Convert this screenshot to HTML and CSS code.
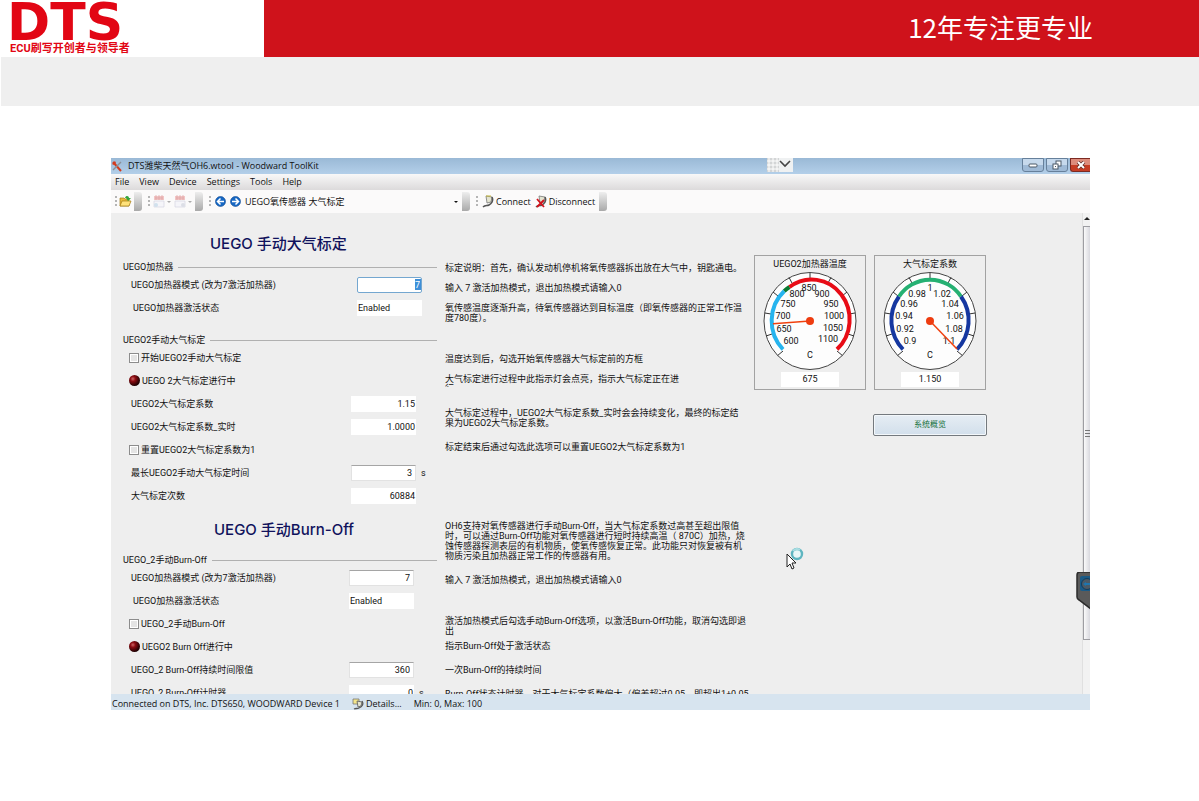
FILE: index.html
```html
<!doctype html>
<html lang="zh-CN">
<head>
	<meta charset="UTF-8">
	<title>DTS</title>
	<link rel="stylesheet" href="styles.css">
</head>
<body>
	<header class="banner">
		<div class="logo">
			<strong class="logo-name">DTS</strong>
			<span class="logo-sub">ECU刷写开创者与领导者</span>
		</div>
		<div class="slogan">12年专注更专业</div>
	</header>
	<div class="band"></div>

	<main class="window">
		<div class="titlebar">
			<svg class="app-icon" width="12" height="12" viewBox="0 0 12 12"><path d="M2 2l8 9" stroke="#d33a1c" stroke-width="2"/><path d="M10 2L2 10" stroke="#8a8f98" stroke-width="1.5"/><path d="M1 4l3-3 1 2-2 2z" fill="#d33a1c"/></svg>
			<span>DTS潍柴天然气OH6.wtool - Woodward ToolKit</span>
			<div class="win-buttons">
				<button class="win-btn" aria-label="Minimize"><svg width="10" height="8" viewBox="0 0 10 8"><rect x="1" y="3" width="8" height="3" rx="1" fill="#fff" stroke="#4b5866"/></svg></button>
				<button class="win-btn" aria-label="Restore"><svg width="10" height="10" viewBox="0 0 10 10"><g fill="#fff" stroke="#4b5866"><rect x="4" y="1" width="5" height="5"/><rect x="1" y="4" width="5" height="5"/></g><rect x="3" y="6" width="1" height="1" fill="#4b5866"/></svg></button>
				<button class="win-btn close" aria-label="Close"><svg width="10" height="8" viewBox="0 0 10 8"><path d="M2 1l6 6M8 1L2 7" stroke="#5b2a26" stroke-width="3.4"/><path d="M2 1l6 6M8 1L2 7" stroke="#fff" stroke-width="2"/></svg></button>
			</div>
			<div class="pull-tab">
				<svg width="26" height="14" viewBox="0 0 26 14"><rect width="12" height="14" fill="#d3d5d6"/><rect x="12" width="14" height="14" fill="#eff1f2"/><path d="M2 0v14M6 0v14M10 0v14M0 3h12M0 7h12M0 11h12" stroke="#fff"/><path d="M13 3l5 5 5-5" fill="none" stroke="#444" stroke-width="1.6"/></svg>
			</div>
		</div>

		<nav class="menubar">
			<a href="#file">File</a>
			<a href="#view">View</a>
			<a href="#device">Device</a>
			<a href="#settings">Settings</a>
			<a href="#tools">Tools</a>
			<a href="#help">Help</a>
		</nav>

		<div class="toolbar">
			<div class="tool-group g-open">
				<i class="grip"></i>
				<button class="tool" aria-label="Open"><svg width="13" height="13" viewBox="0 0 13 13"><path d="M1 11V3h4l1 1h4v7z" fill="#e9b93a" stroke="#a57b14" stroke-width=".7"/><path d="M1 11l2-5h9l-2 5z" fill="#ffe27a" stroke="#a57b14" stroke-width=".7"/><path d="M6 3c1-3 4-2 4 0h2L9 6 7 3z" fill="#35a53a"/></svg></button>
				<i class="tail"></i>
			</div>
			<div class="tool-group g-pages">
				<i class="grip"></i>
				<button class="tool faded" aria-label="Read"><svg width="12" height="13" viewBox="0 0 12 13"><path d="M1 1h10v4H1z" fill="#f0b9b9"/><path d="M2 3h8M3 0v5M6 0v5M9 0v5" stroke="#d98d8d" stroke-width=".7"/><path d="M1 6h10v6H1z" fill="#f4f5f9" stroke="#ccd" stroke-width=".7"/><circle cx="3" cy="10" r="2" fill="#c7dbea"/></svg><b class="caret"></b></button>
				<button class="tool faded" aria-label="Write"><svg width="12" height="13" viewBox="0 0 12 13"><path d="M1 1h10v4H1z" fill="#f0b9b9"/><path d="M2 3h8M3 0v5M6 0v5M9 0v5" stroke="#d98d8d" stroke-width=".7"/><path d="M1 6h10v6H1z" fill="#f4f5f9" stroke="#ccd" stroke-width=".7"/><circle cx="9" cy="10" r="2" fill="#d5d8e2"/></svg><b class="caret"></b></button>
				<i class="tail"></i>
			</div>
			<div class="tool-group">
				<i class="grip"></i>
				<button class="tool" aria-label="Back"><svg width="11" height="11" viewBox="0 0 11 11"><circle cx="5.5" cy="5.5" r="5" fill="#1768c4" stroke="#0e4891" stroke-width=".6"/><path d="M9 5.500H3M5.500 2.500l-3 3 3 3" fill="none" stroke="#fff" stroke-width="1.500"/></svg></button>
				<button class="tool" aria-label="Forward"><svg width="11" height="11" viewBox="0 0 11 11"><circle cx="5.5" cy="5.5" r="5" fill="#1768c4" stroke="#0e4891" stroke-width=".6"/><path d="M2 5.500h6M5.500 2.500l3 3-3 3" fill="none" stroke="#fff" stroke-width="1.500"/></svg></button>
				<select class="page-select" aria-label="Page"><option>UEGO氧传感器 大气标定</option></select>
				<b class="caret dark"></b>
				<i class="tail"></i>
			</div>
			<div class="tool-group">
				<i class="grip"></i>
				<button class="tool"><svg width="12" height="13" viewBox="0 0 12 13"><path d="M4 1l6 1-1 5-4 1z" fill="#e4e4d0" stroke="#777" stroke-width=".8"/><path d="M10 2c2 4-1 7-3 8-2 1-4 0-6 2" fill="none" stroke="#555" stroke-width="1.500"/><path d="M4 1h5" stroke="#c9bb3a"/></svg>Connect</button>
				<button class="tool"><svg width="12" height="13" viewBox="0 0 12 13"><path d="M4 1l6 1-1 5-4 1z" fill="#e4e4d0" stroke="#777" stroke-width=".8"/><path d="M10 2c2 4-1 7-3 8-2 1-4 0-6 2" fill="none" stroke="#555" stroke-width="1.500"/><path d="M2 4l7 8M9 5l-7 7" stroke="#d3121c" stroke-width="1.800"/></svg>Disconnect</button>
				<i class="tail"></i>
			</div>
		</div>

		<div class="workspace">
			<section class="forms">
				<h2 class="title">UEGO 手动大气标定</h2>
				<div class="group heater">
					<h3 class="legend">UEGO加热器</h3>
					<div class="row"><label for="mode1">UEGO加热器模式 (改为7激活加热器)</label><input class="field edit focus" id="mode1" value="7"></div>
					<div class="row status"><label for="state1">UEGO加热器激活状态</label><output class="field left" id="state1">Enabled</output></div>
				</div>
				<div class="group calib">
					<h3 class="legend">UEGO2手动大气标定</h3>
					<div class="row check"><input type="checkbox" id="start"><label for="start">开始UEGO2手动大气标定</label></div>
					<div class="row check"><i class="led"></i><span>UEGO 2大气标定进行中</span></div>
					<div class="row"><label for="factor">UEGO2大气标定系数</label><output class="field" id="factor">1.15</output></div>
					<div class="row"><label for="live">UEGO2大气标定系数_实时</label><output class="field" id="live">1.0000</output></div>
					<div class="row check"><input type="checkbox" id="reset"><label for="reset">重置UEGO2大气标定系数为1</label></div>
					<div class="row"><label for="longest">最长UEGO2手动大气标定时间</label><input class="field edit" id="longest" value="3"><span class="unit">s</span></div>
					<div class="row"><label for="times">大气标定次数</label><output class="field" id="times">60884</output></div>
				</div>
				<h2 class="title second">UEGO 手动Burn-Off</h2>
				<div class="group burn">
					<h3 class="legend">UEGO_2手动Burn-Off</h3>
					<div class="row"><label for="mode2">UEGO加热器模式 (改为7激活加热器)</label><input class="field edit" id="mode2" value="7"></div>
					<div class="row status"><label for="state2">UEGO加热器激活状态</label><output class="field left" id="state2">Enabled</output></div>
					<div class="row check"><input type="checkbox" id="burn"><label for="burn">UEGO_2手动Burn-Off</label></div>
					<div class="row check"><i class="led"></i><span>UEGO2 Burn Off进行中</span></div>
					<div class="row"><label for="limit">UEGO_2 Burn-Off持续时间限值</label><input class="field edit" id="limit" value="360"></div>
					<div class="row"><label for="timer">UEGO_2 Burn-Off计时器</label><output class="field" id="timer">0</output><span class="unit">s</span></div>
				</div>
			</section>

			<section class="notes">
				<p>标定说明：首先，确认发动机停机将氧传感器拆出放在大气中，钥匙通电。</p>
				<p>输入 7 激活加热模式，退出加热模式请输入0</p>
				<p>氧传感温度逐渐升高，待氧传感器达到目标温度（即氧传感器的正常工作温<br>度780度）。</p>
				<p class="gap-lg">温度达到后，勾选开始氧传感器大气标定前的方框</p>
				<p class="clipped">大气标定进行过程中此指示灯会点亮，指示大气标定正在进<br>行</p>
				<p class="gap-md">大气标定过程中，UEGO2大气标定系数_实时会会持续变化，最终的标定结<br>果为UEGO2大气标定系数。</p>
				<p class="gap-sm">标定结束后通过勾选此选项可以重置UEGO2大气标定系数为1</p>
				<p class="gap-xl">OH6支持对氧传感器进行手动Burn-Off，当大气标定系数过高甚至超出限值<br>时，可以通过Burn-Off功能对氧传感器进行短时持续高温（ 870C）加热，烧<br>蚀传感器探测表层的有机物质，使氧传感恢复正常。此功能只对恢复被有机<br>物质污染且加热器正常工作的传感器有用。</p>
				<p class="gap-sm">输入 7 激活加热模式，退出加热模式请输入0</p>
				<p class="gap-lg">激活加热模式后勾选手动Burn-Off选项，以激活Burn-Off功能，取消勾选即退<br>出</p>
				<p class="gap-xs">指示Burn-Off处于激活状态</p>
				<p class="gap-sm">一次Burn-Off的持续时间</p>
				<p class="gap-sm">Burn-Off状态计时器，对于大气标定系数偏大（偏差超过0.05，即超出1±0.05</p>
			</section>

			<section class="meters">
				<div class="gauges">
					<div class="gauge">
						<h4>UEGO2加热器温度</h4>
						<svg width="110" height="100" viewBox="1 0 110 100">
							<g transform="translate(56 49)">
								<ellipse class="dial" rx="46" ry="48.500"/>
								<path class="ticks" d="M0-48v6M21-43.700l-3 5.800M37-29l-5 4M45-8l-6 1M44 15l-6-2M32.500 34.600L27 30M-21-43.700l3 5.800M-37-29l5 4M-45-8l6 1M-44 15l6-2M-32.500 34.600L-27 30"/>
								<path class="arc" stroke="#26b4ee" d="M-27 28.300A38 40 0 0 1-25.700-30"/>
								<path class="arc" stroke="#0a7a30" d="M-25.700-30A38 40 0 0 1-20.500-34"/>
								<path class="arc" stroke="#e80c16" d="M-20.500-34A38 40 0 0 1 27 28.300"/>
								<path class="needle" d="M0 0L-37 2.700"/>
								<circle r="4" fill="#ee3c10"/>
							</g>
							<g class="scale">
								<text x="37" y="72">600</text><text x="30" y="60">650</text><text x="29" y="47">700</text><text x="34" y="35">750</text><text x="43" y="25">800</text><text x="55" y="19">850</text><text x="68" y="25">900</text><text x="77" y="35">950</text><text x="80" y="47">1000</text><text x="79" y="59">1050</text><text x="74" y="70">1100</text><text x="56" y="86">C</text>
							</g>
						</svg>
						<output>675</output>
					</div>
					<div class="gauge">
						<h4>大气标定系数</h4>
						<svg width="110" height="100" viewBox="1 0 110 100">
							<g transform="translate(56 49)">
								<ellipse class="dial" rx="46" ry="48.500"/>
								<path class="ticks" d="M0-48v6M21-43.700l-3 5.800M37-29l-5 4M45-8l-6 1M44 15l-6-2M32.500 34.600L27 30M-21-43.700l3 5.800M-37-29l5 4M-45-8l6 1M-44 15l6-2M-32.500 34.600L-27 30"/>
								<path class="arc" stroke="#1537a0" d="M-27 28.300A38 40 0 0 1-31-24.500"/>
								<path class="arc" stroke="#25b072" d="M-31-24.500A38 40 0 0 1 31-24.500"/>
								<path class="arc" stroke="#1537a0" d="M31-24.500A38 40 0 0 1 27 28.300"/>
							</g>
							<g class="scale">
								<text x="36" y="72">0.9</text><text x="31" y="60">0.92</text><text x="30" y="47">0.94</text><text x="35" y="35">0.96</text><text x="43" y="25">0.98</text><text x="56" y="19">1</text><text x="68" y="25">1.02</text><text x="76" y="35">1.04</text><text x="81" y="47">1.06</text><text x="80" y="60">1.08</text><text x="75" y="72">1.1</text><text x="56" y="86">C</text>
							</g>
							<g transform="translate(56 49)">
								<path class="needle" d="M0 0L27 28"/>
								<circle r="4" fill="#ee3c10"/>
							</g>
						</svg>
						<output>1.150</output>
					</div>
				</div>
				<button class="overview">系统概览</button>
			</section>

			<div class="scrollbar">
				<i class="arrow up"></i>
				<div class="thumb"><i></i></div>
				<i class="arrow down"></i>
			</div>

			<svg class="cursor" width="20" height="24" viewBox="0 0 20 24"><circle cx="12" cy="7" r="5" fill="#e8f6f7" stroke="#5fb5c0" stroke-width="2.400"/><path d="M8 4a5 5 0 0 1 7-1" fill="none" stroke="#a9dde2" stroke-width="2"/><path d="M2 7v13l3-3 2 5 2-1-2-5h4z" fill="#fff" stroke="#222" stroke-width="1"/></svg>
			<svg class="side-tab" width="14" height="38" viewBox="0 0 14 38"><path d="M15 0H4Q1 0 1 3v22q0 2 2 3l12 9z" fill="#5a5a5a" stroke="#2b2b2b" stroke-width="1.500"/><rect x="4" y="4" width="12" height="15" rx="2" fill="#1a5a86"/><circle cx="11" cy="12" r="5.500" fill="#4b5a66" stroke="#123c5c"/><path d="M7 12l3-2v1h5v2h-5v1z" fill="#1e75ae"/></svg>
		</div>

		<footer class="statusbar">
			<span>Connected on DTS, Inc. DTS650, WOODWARD Device 1</span>
			<a class="details" href="#details"><svg width="12" height="12" viewBox="0 0 12 12"><path d="M1 1h6v5H1z" fill="#f3e58a" stroke="#777" stroke-width=".8"/><path d="M5 3l5 1-1 4-3 1z" fill="#e4e4d0" stroke="#555" stroke-width=".8"/><path d="M10 3c2 3 0 6-3 7-2 1-3 0-5 1" fill="none" stroke="#555" stroke-width="1.300"/></svg>Details...</a>
			<span>Min: 0, Max: 100</span>
		</footer>
	</main>
</body>
</html>
```
FILE: styles.css
```css
*{margin:0;padding:0;box-sizing:border-box;}
body{
	background:#fff;
	color:#111;
	font-family:Roboto,"Noto Sans CJK SC",sans-serif;
	font-size:9px;
	line-height:10px;
}
button,input,select{font:inherit;color:inherit;}
a{color:inherit;text-decoration:none;}
h2,h3,h4{font-weight:normal;}
svg{display:block;flex:none;}

/* banner */
.banner{
	display:flex;
	height:57px;
}
.logo{
	width:264px;
	padding:2px 0 0 7px;
	color:#e20614;
}
.logo-name{
	display:block;
	font:bold 52px/40px "DejaVu Sans",sans-serif;
}
.logo-sub{
	display:block;
	padding-left:3px;
	font-size:11px;
	font-weight:bold;
	line-height:14px;
}
.slogan{
	flex:1;
	padding-right:106px;
	background:#cf121b;
	color:#fff;
	font:26px/54px "Noto Sans CJK SC",sans-serif;
	text-align:right;
}
.band{
	height:49px;
	margin-left:1px;
	background:#efefef;
}

/* window */
.window{
	margin:52px 109px 0 111px;
	background:#eee;
	white-space:nowrap;
}
.titlebar,.menubar,.toolbar,.statusbar{
	display:flex;
	align-items:center;
	font-family:"Open Sans","Noto Sans CJK SC",sans-serif;
}
.titlebar{
	position:relative;
	height:16px;
	gap:5px;
	background:linear-gradient(#9ab9d6,#b3cfe9);
}
.win-buttons{
	display:flex;
	gap:2px;
	align-self:flex-start;
	margin-left:auto;
}
.win-btn{
	display:flex;
	align-items:center;
	justify-content:center;
	width:22px;
	height:14px;
	border:1px solid #66809b;
	border-radius:0 0 3px 3px;
	background:linear-gradient(#c6d9ec 50%,#9fbad6 50%);
}
.win-btn.close{
	width:20px;
	border-color:#7c2a22;
	border-right:0;
	border-radius:0 0 0 3px;
	background:linear-gradient(#dd8c7c 50%,#c53d25 50%);
}
.pull-tab{
	position:absolute;
	left:67%;
	top:0;
}
.menubar{
	height:16px;
	padding-left:4px;
	gap:10px;
	background:linear-gradient(#f8f8f8,#dcdadb);
}
.toolbar{
	height:23px;
	padding-left:4px;
	background:#fbfafa;
}
.tool-group{
	display:flex;
	align-items:center;
	gap:4px;
	height:21px;
	margin-right:6px;
}
.g-open{gap:2px;}
.g-pages{gap:3px;}
.grip{
	width:2px;
	height:12px;
	background:repeating-linear-gradient(#b5b5b5 0 2px,transparent 2px 4px);
}
.tail{
	width:8px;
	height:19px;
	border-radius:0 3px 3px 0;
	background:linear-gradient(#eee,#a9a9a9);
}
.tool{
	display:flex;
	align-items:center;
	gap:2px;
	border:0;
	background:none;
}
.faded{opacity:.8;}
.caret{
	border:2px solid transparent;
	border-top:2px solid #999;
	border-bottom:0;
}
.caret.dark{border-top-color:#111;}
.page-select{
	width:205px;
	border:0;
	appearance:none;
	background:none;
}

/* workspace */
.workspace{
	position:relative;
	display:grid;
	grid-template-columns:326px 309px 1fr 8px;
	height:481px;
	overflow:hidden;
}
.forms{padding:19px 0 0 12px;}
.title{
	margin-bottom:5px;
	padding-left:87px;
	color:#10125c;
	font:500 15px/24px Inter,"Noto Sans CJK SC",sans-serif;
}
.title.second{
	margin:11px 0 12px;
	padding-left:91px;
}
.legend{
	display:flex;
	align-items:center;
	gap:5px;
	height:12px;
	font-size:9px;
}
.legend::after{
	content:"";
	flex:1;
	height:1px;
	background:#b0b0b0;
}
.group.calib{margin-top:15px;}
.row{
	display:grid;
	grid-template-columns:1fr 65px 15px;
	align-items:center;
	height:23px;
	padding-left:8px;
}
.calib .row{grid-template-columns:1fr 65px 21px;}
.burn .row{grid-template-columns:1fr 65px 23px;}
.row.status{padding-left:10px;}
.group .row.check{
	grid-template-columns:10px 1fr;
	gap:2px;
	padding-left:6px;
}
.row input[type=checkbox]{
	appearance:none;
	width:10px;
	height:10px;
	border:1px solid #8c8c8c;
	background:#e4e4e4;
	box-shadow:inset 0 0 0 1px #fff;
}
.led{
	width:11px;
	height:11px;
	border-radius:50%;
	background:radial-gradient(circle at 35% 35%,#c66 0,#8c0c12 25%,#2a0204 65%,#000);
}
.led + span{padding-left:1px;}
.field{
	display:block;
	width:65px;
	height:16px;
	padding:0 1px;
	border:0;
	background:#fff;
	line-height:16px;
	text-align:right;
}
.field.left{text-align:left;}
.field.edit{
	padding-right:3px;
	border:1px solid #e2e2e2;
	border-top-color:#a5a5a5;
	line-height:14px;
}
.field.edit.focus{
	padding-right:1px;
	border-color:#74a7d0;
	border-radius:2px;
	background:linear-gradient(#3e8fd8,#3e8fd8) no-repeat right 0 center/6px 11px #fff;
	color:#fff;
}
.unit{padding-left:5px;}

/* explanations */
.notes{
	padding:50px 0 0 8px;
}
.notes p + p{margin-top:10px;}
.notes p.gap-xs{margin-top:5px;}
.notes p.gap-sm{margin-top:14px;}
.notes p.gap-md{margin-top:21px;}
.notes p.gap-lg{margin-top:31px;}
.notes p.gap-xl{margin-top:69px;}
.notes .clipped{
	height:13px;
	overflow:hidden;
}

/* gauges */
.meters{
	width:241px;
	padding:42px 0 0 8px;
}
.gauges{
	display:grid;
	grid-template-columns:112px 112px;
	gap:8px;
}
.gauge{
	display:flex;
	flex-direction:column;
	align-items:center;
	height:135px;
	border:1px solid #a2a2a2;
}
.gauge h4{
	font-size:9px;
	line-height:16px;
}
.gauge output{
	width:58px;
	background:#fff;
	line-height:15px;
	text-align:center;
}
.dial{
	fill:#fdfdfd;
	stroke:#444;
}
.ticks{
	fill:none;
	stroke:#333;
}
.arc{
	fill:none;
	stroke-width:4;
}
.needle{
	stroke:#f0410f;
	stroke-width:1.5;
}
.scale{
	fill:#111;
	font-size:9px;
	text-anchor:middle;
}
.overview{
	display:block;
	width:114px;
	height:22px;
	margin:24px 0 0 auto;
	border:1px solid #74797e;
	border-radius:2px;
	background:linear-gradient(#e6edf4,#d2dfeb);
	box-shadow:inset 0 0 0 1px #f3f7fa;
	color:#15703a;
	font-size:8px;
}

/* scrollbar */
.scrollbar{
	display:flex;
	flex-direction:column;
	align-items:center;
	padding:4px 0;
	border-left:1px solid #e0e0e0;
	background:#f2f2f2;
}
.arrow{
	border:3px solid transparent;
}
.arrow.up{
	border-top:0;
	border-bottom-color:#222;
}
.arrow.down{
	margin-top:auto;
	border-bottom:0;
	border-top-color:#222;
}
.thumb{
	display:flex;
	align-items:center;
	justify-content:flex-end;
	width:100%;
	height:414px;
	margin-top:6px;
	border:1px solid #9d9da2;
	border-right:0;
	background:linear-gradient(90deg,#fafafa,#d8d8de);
}
.thumb i{
	width:5px;
	height:7px;
	background:repeating-linear-gradient(#777 0 1px,transparent 1px 3px);
}

/* things floating over the workspace */
.cursor{
	position:absolute;
	left:674px;
	top:334px;
}
.side-tab{
	position:absolute;
	right:0;
	top:359px;
}

/* status bar */
.statusbar{
	height:16px;
	padding:3px 0 0 1px;
	gap:12px;
	background:#d7e4ef;
}
.details{
	display:flex;
	align-items:center;
	gap:2px;
}
```
